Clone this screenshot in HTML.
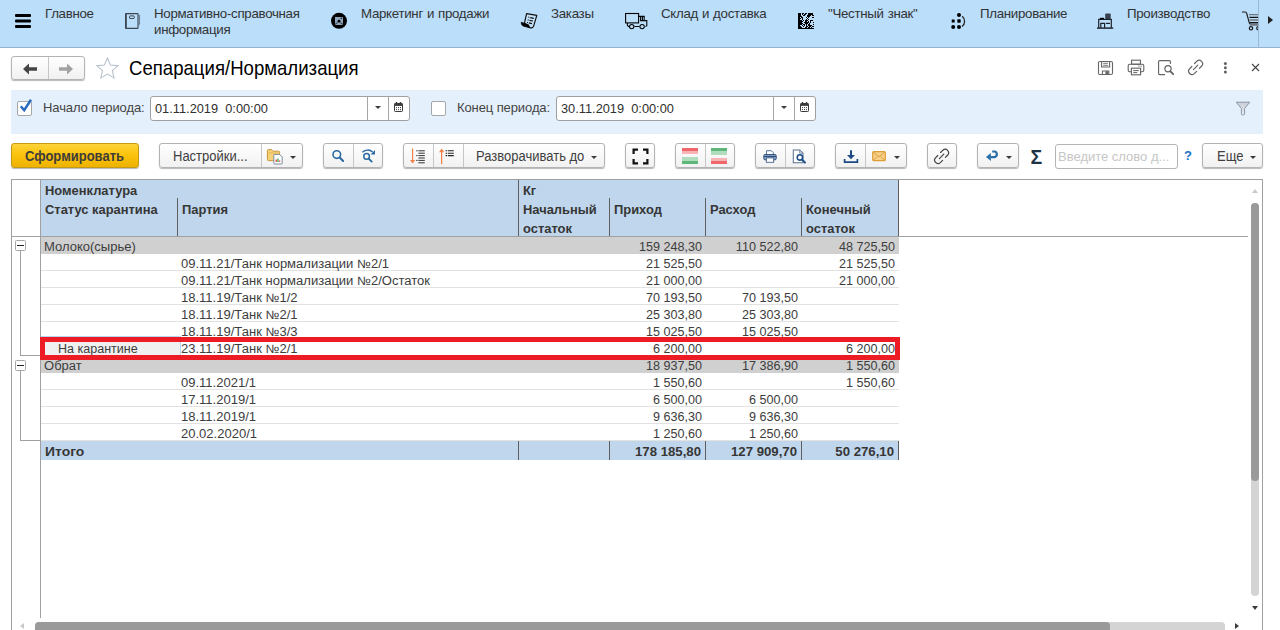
<!DOCTYPE html>
<html lang="ru">
<head>
<meta charset="utf-8">
<title>Сепарация/Нормализация</title>
<style>
*{box-sizing:border-box;margin:0;padding:0}
html,body{width:1280px;height:630px;overflow:hidden;background:#fff}
body{position:relative;font-family:"Liberation Sans",Arial,sans-serif;font-size:12.7px;color:#333;}
.abs{position:absolute}
/* ---------- top sections panel ---------- */
#nav{position:absolute;left:0;top:0;width:1280px;height:48px;background:#bbdefa;border-bottom:1px solid #96b2ce}
#nav .t{position:absolute;top:5.6px;font-size:13.3px;letter-spacing:-.3px;word-spacing:.6px;line-height:16px;color:#333;white-space:nowrap}
#nav svg{position:absolute}
/* ---------- title row ---------- */
#title{position:absolute;left:129px;top:57px;font-size:18.6px;line-height:24px;color:#000;white-space:nowrap;transform:scaleY(1.075);transform-origin:0 18px}
.btn{position:absolute;height:25px;border:1px solid #b3b3b3;border-radius:3px;background:linear-gradient(#ffffff,#f1f1f1);box-shadow:0 1px 1px rgba(0,0,0,.28)}
.btn .sep{position:absolute;top:0;bottom:0;width:1px;background:#c6c6c6}
.btn .lbl{position:absolute;top:0;line-height:25px;font-size:13px;color:#404040;white-space:nowrap;transform:scaleY(1.08);transform-origin:0 17px}
.btn svg{position:absolute}
.caret{position:absolute;width:0;height:0;border-left:3px solid transparent;border-right:3px solid transparent;border-top:3px solid #3a3a3a;margin-top:2px}
/* ---------- filter panel ---------- */
#filter{position:absolute;left:11px;top:90px;width:1252px;height:44px;background:#e4f0fc}
.lab{position:absolute;font-size:13px;letter-spacing:-.1px;line-height:16px;color:#444;white-space:nowrap}
.inp{position:absolute;height:25px;border:1px solid #a0a0a0;border-radius:3px;background:#fff}
.inp .val{position:absolute;left:4px;top:0;line-height:23px;font-size:12.8px;color:#303030;white-space:pre}
.inp svg{position:absolute}
.inp .sep{position:absolute;top:0;bottom:0;width:1px;background:#a6a6a6}
.chk{position:absolute;width:15px;height:15px;border:1px solid #a6a6a6;border-radius:2px;background:#fff}
/* ---------- table ---------- */
#grid{position:absolute;left:11px;top:179px;width:1252px;height:460px;border:1px solid #9f9f9f;background:#fff}
.cell{position:absolute;font-size:12px;letter-spacing:0;line-height:17px;color:#3d3d3d;white-space:nowrap;transform:scaleX(1.085);transform-origin:0 0}
.hd{font-size:12px;line-height:19px;color:#363636;transform:scaleX(1.075)}
.num{text-align:right;transform:scaleX(1.05);transform-origin:100% 0}
.tot{font-size:13.2px;transform:none}
.b{font-weight:bold}
</style>
</head>
<body>

<!-- ======= sections panel ======= -->
<div id="nav">
<svg style="left:15px;top:14px" width="16" height="14" viewBox="0 0 16 14"><rect x="0" y="0" width="16" height="3" rx="1" fill="#000"/><rect x="0" y="5.5" width="16" height="3" rx="1" fill="#000"/><rect x="0" y="11" width="16" height="3" rx="1" fill="#000"/></svg>
<div class="t" style="left:45px">Главное</div>

<svg style="left:124px;top:12px" width="17" height="18" viewBox="0 0 17 18"><rect x="1.6" y="1.6" width="12.4" height="14.8" rx=".4" fill="none" stroke="#3c4650" stroke-width="1.1"/><rect x="1.2" y="1.6" width="1.6" height="14.8" fill="#3c4650"/><rect x="5.6" y="3.9" width="4.6" height="2.6" rx=".5" fill="none" stroke="#3c4650" stroke-width="1"/><path d="M14.2 3.4h1.4v2.2h-1.4M14.2 6.6h1.4v2.2h-1.4M14.2 9.8h1.4v2.2h-1.4M14.2 13h1.4" fill="#7d8fa3" stroke="#56667a" stroke-width=".8"/></svg>
<div class="t" style="left:154px">Нормативно-справочная<br>информация</div>

<svg style="left:330px;top:12px" width="18" height="18" viewBox="0 0 18 18"><circle cx="9" cy="8.8" r="8" fill="#000"/><rect x="5" y="5" width="8" height="8" fill="#90a6bc"/><circle cx="9" cy="9.2" r="1.4" fill="#000"/><path d="M5.6 12.6c.4-1.6 1.4-2 2-1.6M12.4 12.6c-.4-1.6-1.4-2-2-1.6" fill="none" stroke="#1a1a1a" stroke-width="1"/><path d="M10.6 6.8l1.4-1" stroke="#222" stroke-width="1.2"/></svg>
<div class="t" style="left:361px">Маркетинг и продажи</div>

<svg style="left:520px;top:11px" width="19" height="19" viewBox="0 0 19 19"><path d="M6.6 2.6L16.8 4.4 13.6 15.2Q12.6 17.4 10.4 16.8 8.2 16 8.6 14.2L4.4 12.4Z" fill="#c4e2fa" stroke="#111" stroke-width="1.2" stroke-linejoin="round"/><path d="M1.3 11.2L8.6 14.2Q8.2 16 10 16.9L2.6 14.8Q1 13.6 1.3 11.2Z" fill="#000" stroke="#000" stroke-width=".8" stroke-linejoin="round"/><path d="M8.4 6.2l.9.2M10.2 6.6l3.6.7M7.7 8.9l.9.2M9.5 9.3l3.4.7M7 11.5l.9.2M8.8 11.9l3.2.7" stroke="#111" stroke-width="1.2"/></svg>
<div class="t" style="left:551px">Заказы</div>

<svg style="left:624px;top:12px" width="24" height="18" viewBox="0 0 24 18"><rect x="1.6" y="1.5" width="13" height="9.4" fill="none" stroke="#000" stroke-width="1.1"/><path d="M14.6 4.4h5.6v4.2h-3.6v-4M18.4 4.6v3.8" fill="none" stroke="#000" stroke-width="1.1"/><path d="M20.6 8.6h2.2v5.2l-1.4.8" fill="none" stroke="#000" stroke-width="1.05"/><path d="M3.4 11v2.4l1.6 1.4M10.4 14.4h5" fill="none" stroke="#000" stroke-width="1.05"/><circle cx="7.7" cy="14.6" r="2.2" fill="none" stroke="#000" stroke-width="1.05"/><circle cx="18.1" cy="14.6" r="2.2" fill="none" stroke="#000" stroke-width="1.05"/></svg>
<div class="t" style="left:661px">Склад и доставка</div>

<svg style="left:798px;top:13px" width="16" height="16" viewBox="0 0 16 16"><rect width="16" height="16" fill="#000"/><path d="M3 0h1v1h-1zM6 0h1v1h-1zM9 0h1v1h-1zM15 0h1v1h-1zM3 1h1v1h-1zM5 1h1v1h-1zM8 1h1v1h-1zM9 1h1v1h-1zM15 1h1v1h-1zM3 2h1v1h-1zM4 2h1v1h-1zM7 2h1v1h-1zM8 2h1v1h-1zM13 2h1v1h-1zM4 3h1v1h-1zM5 3h1v1h-1zM6 3h1v1h-1zM7 3h1v1h-1zM8 3h1v1h-1zM12 3h1v1h-1zM13 3h1v1h-1zM14 3h1v1h-1zM15 3h1v1h-1zM2 4h1v1h-1zM5 4h1v1h-1zM6 4h1v1h-1zM7 4h1v1h-1zM9 4h1v1h-1zM11 4h1v1h-1zM12 4h1v1h-1zM13 4h1v1h-1zM3 5h1v1h-1zM5 5h1v1h-1zM6 5h1v1h-1zM7 5h1v1h-1zM8 5h1v1h-1zM10 5h1v1h-1zM11 5h1v1h-1zM12 5h1v1h-1zM13 5h1v1h-1zM14 5h1v1h-1zM15 5h1v1h-1zM2 6h1v1h-1zM3 6h1v1h-1zM5 6h1v1h-1zM6 6h1v1h-1zM7 6h1v1h-1zM9 6h1v1h-1zM11 6h1v1h-1zM12 6h1v1h-1zM13 6h1v1h-1zM14 6h1v1h-1zM15 6h1v1h-1zM4 7h1v1h-1zM6 7h1v1h-1zM10 7h1v1h-1zM11 7h1v1h-1zM15 7h1v1h-1zM5 8h1v1h-1zM6 8h1v1h-1zM9 8h1v1h-1zM11 8h1v1h-1zM13 8h1v1h-1zM14 8h1v1h-1zM15 8h1v1h-1zM4 9h1v1h-1zM5 9h1v1h-1zM11 9h1v1h-1zM13 9h1v1h-1zM14 9h1v1h-1zM5 10h1v1h-1zM6 10h1v1h-1zM10 10h1v1h-1zM12 10h1v1h-1zM13 10h1v1h-1zM14 10h1v1h-1zM15 10h1v1h-1zM4 11h1v1h-1zM7 11h1v1h-1zM9 11h1v1h-1zM12 11h1v1h-1zM13 11h1v1h-1zM14 11h1v1h-1zM2 12h1v1h-1zM3 12h1v1h-1zM5 12h1v1h-1zM7 12h1v1h-1zM9 12h1v1h-1zM14 12h1v1h-1zM15 12h1v1h-1zM3 13h1v1h-1zM4 13h1v1h-1zM6 13h1v1h-1zM7 13h1v1h-1zM10 13h1v1h-1zM13 13h1v1h-1zM4 14h1v1h-1zM5 14h1v1h-1zM6 14h1v1h-1zM9 14h1v1h-1zM12 14h1v1h-1zM14 14h1v1h-1zM15 14h1v1h-1z" fill="#bbdefa"/></svg>
<div class="t" style="left:828px">"Честный знак"</div>

<svg style="left:950px;top:12px" width="17" height="18" viewBox="0 0 17 18"><circle cx="9" cy="2.9" r="2" fill="#000"/><rect x="1.7" y="7.5" width="3" height="3" rx=".6" fill="#000"/><rect x="7.3" y="7.3" width="3.4" height="3.4" rx=".6" fill="#000"/><circle cx="3.2" cy="15.1" r="2" fill="#000"/><circle cx="9" cy="15.1" r="2" fill="#000"/><path d="M12.2 4.2c3.2 2.6 3.2 7.8-.2 10.4" fill="none" stroke="#222" stroke-width="1.3"/></svg>
<div class="t" style="left:980px">Планирование</div>

<svg style="left:1096px;top:12px" width="18" height="18" viewBox="0 0 18 18"><rect x="9.2" y="1.4" width="5.5" height="5.6" rx=".8" fill="#38424e"/><path d="M2.7 16V7.4h12.6V16" fill="none" stroke="#1b2028" stroke-width="1.2"/><path d="M4 6.6h4" stroke="#000" stroke-width="1.6"/><path d="M4.8 16v-4.6h3.8V16" fill="none" stroke="#1b2028" stroke-width="1.2"/><path d="M10 11.4h4" stroke="#1b2028" stroke-width="1.2"/><path d="M1 16.1h16.2" stroke="#2a323c" stroke-width="1.6"/></svg>
<div class="t" style="left:1127px">Производство</div>

<svg style="left:1241px;top:10px" width="17" height="21" viewBox="0 0 17 21"><path d="M1.4 2h2.8c.8 0 1.2.4 1.5 1.4l2.6 9.4c.2.8.6 1.2 1.4 1.2h7.4" fill="none" stroke="#1c1c1c" stroke-width="1.2" stroke-linecap="round"/><path d="M8 4.7h9.2M8.6 10h8.6M8.6 15.2h8.6" stroke="#70757c" stroke-width="1.3"/><path d="M8.4 7.4h8.8M8.6 12.5h8.6" stroke="#111" stroke-width="1.2"/><circle cx="10" cy="18.3" r="1.7" fill="none" stroke="#1c1c1c" stroke-width="1.2"/><circle cx="17.4" cy="18.3" r="1.7" fill="none" stroke="#1c1c1c" stroke-width="1.2"/></svg>
<div class="abs" style="left:1258px;top:0;width:1px;height:47px;background:#9bb7d3"></div>
<div class="abs" style="left:1268px;top:16px;width:0;height:0;border-top:4.5px solid transparent;border-bottom:4.5px solid transparent;border-left:5.5px solid #222"></div>
</div>

<!-- ======= title row ======= -->

<div class="btn" style="left:11px;top:56px;width:74px;height:24px">
  <div class="sep" style="left:36px"></div>
  <svg style="left:11px;top:6px" width="15" height="12" viewBox="0 0 15 12"><path d="M0 6l6-5.6v3.9h8v3.4h-8v3.9z" fill="#444"/></svg>
  <svg style="left:47px;top:6px" width="15" height="12" viewBox="0 0 15 12"><path d="M14 6l-6-5.6v3.9h-8v3.4h8v3.9z" fill="#a2a2a2"/></svg>
</div>
<svg class="abs" style="left:95px;top:56px" width="25" height="24" viewBox="0 0 27 26"><path d="M13.4 2.2l3.3 7.6 8.2.7-6.2 5.4 1.9 8-7.2-4.3-7.2 4.3 1.9-8-6.2-5.4 8.2-.7z" fill="#fff" stroke="#b5bfca" stroke-width="1.1" stroke-linejoin="miter"/></svg>
<div id="title">Сепарация/Нормализация</div>

<!-- right-side form icons -->
<svg class="abs" style="left:1097px;top:60px" width="17" height="16" viewBox="0 0 17 16"><rect x="1.5" y="1.5" width="14" height="13" rx="1.4" fill="none" stroke="#666" stroke-width="1.1"/><path d="M4.6 1.6v5.4h8V1.6" fill="none" stroke="#666" stroke-width="1.1"/><path d="M6.2 3.3h4.8M6.2 5.3h4.8" stroke="#666" stroke-width=".9"/><path d="M5.4 14.4v-3.4h6.4v3.4" fill="none" stroke="#666" stroke-width="1.1"/><rect x="8.4" y="11.2" width="3" height="3.2" fill="#666"/></svg>
<svg class="abs" style="left:1127px;top:59px" width="18" height="17" viewBox="0 0 18 17"><rect x="4.6" y="1.2" width="8.8" height="4" fill="none" stroke="#636363" stroke-width="1.1"/><rect x="1.2" y="5.2" width="15.6" height="7.6" rx="1.6" fill="none" stroke="#636363" stroke-width="1.1"/><rect x="4.4" y="9.2" width="9.2" height="6.6" fill="#fff" stroke="#636363" stroke-width="1.1"/><path d="M6.2 11.6h5.6M6.2 13.6h4" stroke="#636363" stroke-width="1"/><path d="M11.4 7.2h1M13.6 7.2h1" stroke="#636363" stroke-width="1.2"/></svg>
<svg class="abs" style="left:1157px;top:59px" width="18" height="18" viewBox="0 0 18 18"><path d="M13.4 5V2.6a1 1 0 0 0-1-1H2.6a1 1 0 0 0-1 1v12a1 1 0 0 0 1 1H8" fill="none" stroke="#636363" stroke-width="1.1"/><circle cx="11" cy="9.8" r="3.1" fill="none" stroke="#636363" stroke-width="1.2"/><path d="M13.2 12.2l3 3" stroke="#636363" stroke-width="1.8" stroke-linecap="round"/></svg>
<svg class="abs" style="left:1187px;top:59px" width="18" height="18" viewBox="0 0 18 18"><g fill="none" stroke="#636363" stroke-width="1.2" stroke-linecap="round"><path d="M7.6 4.5L9.9 2.2A3.4 3.4 0 0 1 14.7 7L12.4 9.3"/><path d="M9.6 12.3L7.3 14.6A3.4 3.4 0 0 1 2.5 9.8L4.8 7.5"/><path d="M6.4 10.6L10.8 6.2"/></g></svg>
<svg class="abs" style="left:1222px;top:61px" width="7" height="14" viewBox="0 0 7 14"><circle cx="3.4" cy="2.5" r="1.5" fill="#636363"/><circle cx="3.4" cy="6.7" r="1.5" fill="#636363"/><circle cx="3.4" cy="10.9" r="1.5" fill="#636363"/></svg>
<svg class="abs" style="left:1251px;top:63px" width="9" height="9" viewBox="0 0 9 9"><path d="M1 1l7 7M8 1l-7 7" stroke="#444" stroke-width="1.1"/></svg>


<!-- ======= filter ======= -->

<div id="filter">
  <div class="chk" style="left:6px;top:11px"></div>
  <svg class="abs" style="left:7px;top:8px" width="16" height="16" viewBox="0 0 16 16"><path d="M2.8 8.2l3.4 4 6.8-10.4" fill="none" stroke="#2a6bbd" stroke-width="2.5"/></svg>
  <div class="lab" style="left:32px;top:10px">Начало периода:</div>
  <div class="inp" style="left:139px;top:6px;width:260px">
    <div class="val">01.11.2019  0:00:00</div>
    <div class="sep" style="left:216px"></div><div class="caret" style="left:224px;top:7px"></div>
    <div class="sep" style="left:237px"></div><svg style="left:243px;top:5px" width="9" height="10" viewBox="0 0 9 10"><rect x=".5" y="1.5" width="8" height="8" rx=".8" fill="#fff" stroke="#3a3a3a" stroke-width="1"/><rect x=".5" y="1.5" width="8" height="2.4" fill="#3a3a3a"/><path d="M2.5 0v2M6.5 0v2" stroke="#3a3a3a" stroke-width="1.4"/><path d="M2 5.6h1M4 5.6h1M6 5.6h1M2 7.6h1M4 7.6h1M6 7.6h1" stroke="#3a3a3a" stroke-width="1"/></svg>
  </div>
  <div class="chk" style="left:420px;top:11px"></div>
  <div class="lab" style="left:446px;top:10px">Конец периода:</div>
  <div class="inp" style="left:545px;top:6px;width:260px">
    <div class="val">30.11.2019  0:00:00</div>
    <div class="sep" style="left:216px"></div><div class="caret" style="left:224px;top:7px"></div>
    <div class="sep" style="left:237px"></div><svg style="left:243px;top:5px" width="9" height="10" viewBox="0 0 9 10"><rect x=".5" y="1.5" width="8" height="8" rx=".8" fill="#fff" stroke="#3a3a3a" stroke-width="1"/><rect x=".5" y="1.5" width="8" height="2.4" fill="#3a3a3a"/><path d="M2.5 0v2M6.5 0v2" stroke="#3a3a3a" stroke-width="1.4"/><path d="M2 5.6h1M4 5.6h1M6 5.6h1M2 7.6h1M4 7.6h1M6 7.6h1" stroke="#3a3a3a" stroke-width="1"/></svg>
  </div>
  <svg class="abs" style="left:1224px;top:11px" width="16" height="15" viewBox="0 0 16 15"><defs><linearGradient id="fg" x1="0" y1="0" x2="0" y2="1"><stop offset="0" stop-color="#c9ced6"/><stop offset="1" stop-color="#e9ecf1"/></linearGradient></defs><path d="M1.2 1.2h13.6l-5.2 6.2v5.4a1 1 0 0 1-1 1H7.4a1 1 0 0 1-1-1V7.4z" fill="url(#fg)" stroke="#8b96a6" stroke-width="1" stroke-linejoin="round"/></svg>
</div>


<!-- ======= toolbar ======= -->

<div id="toolbar">
  <!-- Сформировать -->
  <div class="btn" style="left:11px;top:143px;width:128px;border-color:#c29a14;background:linear-gradient(#fdd33a,#fbc40c 45%,#eeb200)">
    <div class="lbl b" style="left:13px;font-size:13px;color:#3f3d3a">Сформировать</div>
  </div>
  <!-- Настройки -->
  <div class="btn" style="left:159px;top:143px;width:144px">
    <div class="lbl" style="left:13px">Настройки...</div>
    <div class="sep" style="left:101px"></div>
    <svg style="left:106px;top:3px" width="18" height="18" viewBox="0 0 18 18"><path d="M1.4 3.6a1 1 0 0 1 1-1h3.2l1.4 1.6h5.6a1 1 0 0 1 1 1v7.4a1 1 0 0 1-1 1H2.4a1 1 0 0 1-1-1z" fill="#f5d27a" stroke="#c9973a" stroke-width="1"/><path d="M1.6 6h12" stroke="#e7b95a" stroke-width="1"/><path d="M8.4 7.4h5.2l2.6 2.6v6.4a.6.6 0 0 1-.6.6H8.4a.6.6 0 0 1-.6-.6V8a.6.6 0 0 1 .6-.6z" fill="#fff" stroke="#7c8da0" stroke-width="1"/><path d="M10.2 15v-2.6" stroke="#e0403a" stroke-width="1.3"/><path d="M12 15v-3.6" stroke="#39a84c" stroke-width="1.3"/><path d="M13.7 15v-1.6" stroke="#e0403a" stroke-width="1.1"/></svg>
    <div class="caret" style="left:130px;top:10px"></div>
  </div>
  <!-- search group -->
  <div class="btn" style="left:323px;top:143px;width:60px">
    <div class="sep" style="left:29px"></div>
    <svg style="left:7px;top:5px" width="15" height="15" viewBox="0 0 15 15"><circle cx="5.8" cy="5.6" r="3.8" fill="none" stroke="#2a6aa2" stroke-width="1.6"/><path d="M8.7 8.6l3.4 3.4" stroke="#2a6aa2" stroke-width="2.1" stroke-linecap="round"/></svg>
    <svg style="left:37px;top:4px" width="16" height="16" viewBox="0 0 16 16"><circle cx="5.6" cy="8.4" r="2.8" fill="none" stroke="#2a6aa2" stroke-width="1.5"/><path d="M7.7 10.6l3 3" stroke="#2a6aa2" stroke-width="1.9" stroke-linecap="round"/><path d="M1.4 4.2c3-2.8 7.4-2.8 10.2-.2" fill="none" stroke="#2a6aa2" stroke-width="1.4"/><path d="M14 2v4.4h-4.4z" fill="#2a6aa2"/></svg>
  </div>
  <!-- expand group -->
  <div class="btn" style="left:403px;top:143px;width:202px">
    <div class="sep" style="left:29px"></div>
    <div class="sep" style="left:59px"></div>
    <svg style="left:5px;top:4px" width="18" height="17" viewBox="0 0 18 17"><path d="M3.6 .6v13.4" stroke="#f08146" stroke-width="1.2"/><path d="M1 12l2.6 3.6L6.2 12z" fill="#f08146"/><path d="M7.2 2.8h1.4M9.4 2.8h6.4M9.4 5.2h6.4M7.2 7.6h1.4M9.4 7.6h6.4M9.4 10h6.4M7.2 12.4h1.4M9.4 12.4h6.4M9.4 14.8h6.4" stroke="#333" stroke-width="1"/></svg>
    <svg style="left:34px;top:4px" width="18" height="17" viewBox="0 0 18 17"><path d="M3.6 2.6v13.6" stroke="#f08146" stroke-width="1.2"/><path d="M1 4.2L3.6 .6l2.6 3.6z" fill="#f08146"/><path d="M7.6 2.8h1.4M9.8 2.8h6M7.6 5.2h1.4M9.8 5.2h6M7.6 7.6h1.4M9.8 7.6h6" stroke="#222" stroke-width="1.1"/></svg>
    <div class="lbl" style="left:72px">Разворачивать до</div>
    <div class="caret" style="left:187px;top:10px"></div>
  </div>
  <!-- fullscreen -->
  <div class="btn" style="left:625px;top:143px;width:30px">
    <svg style="left:6px;top:4px" width="17" height="17" viewBox="0 0 17 17"><path d="M1.6 6V1.6H6M11 1.6h4.4V6M15.4 11v4.4H11M6 15.4H1.6V11" fill="none" stroke="#111" stroke-width="2.2"/></svg>
  </div>
  <!-- colour group -->
  <div class="btn" style="left:675px;top:143px;width:60px">
    <div class="sep" style="left:29px"></div>
    <svg style="left:6px;top:4px" width="16" height="17" viewBox="0 0 16 17" shape-rendering="crispEdges"><rect x="0" y="0" width="17" height="3" fill="#f0666a"/><rect x="0" y="3" width="17" height="3" fill="#f7b4b6"/><rect x="0" y="9" width="17" height="4" fill="#b1dcbd"/><rect x="0" y="13" width="17" height="3" fill="#5db878"/></svg>
    <svg style="left:35px;top:4px" width="16" height="17" viewBox="0 0 16 17" shape-rendering="crispEdges"><rect x="0" y="0" width="17" height="3" fill="#5db878"/><rect x="0" y="3" width="17" height="4" fill="#b1dcbd"/><rect x="0" y="10" width="17" height="3" fill="#f7b4b6"/><rect x="0" y="13" width="17" height="3" fill="#f0666a"/></svg>
  </div>
  <!-- print group -->
  <div class="btn" style="left:755px;top:143px;width:60px">
    <div class="sep" style="left:29px"></div>
    <svg style="left:7px;top:5.5px" width="14" height="13.2" viewBox="0 0 16 15"><path d="M4 .8h5.6l2.2 2.2v3H4z" fill="#fff" stroke="#41608a" stroke-width="1"/><rect x=".9" y="5.2" width="14.2" height="6" rx="1.4" fill="#8aa5c6" stroke="#2c4c78" stroke-width="1.1"/><path d="M1.4 7.4h13.2" stroke="#2c4c78" stroke-width="1.2"/><rect x="3.8" y="9" width="8.4" height="5" fill="#fff" stroke="#41608a" stroke-width="1"/></svg>
    <svg style="left:36px;top:5px" width="15.6" height="15.6" viewBox="0 0 17 17"><path d="M1.4 1h7l3.6 3.6v10.4H1.4z" fill="#fff" stroke="#58708f" stroke-width="1.1"/><path d="M8.4 1v3.6H12" fill="none" stroke="#6c87a8" stroke-width="1"/><circle cx="8.6" cy="9.2" r="2.9" fill="#fff" stroke="#1e4f86" stroke-width="1.7"/><path d="M10.9 11.6l3.2 3.2" stroke="#1e4f86" stroke-width="2.2" stroke-linecap="round"/></svg>
  </div>
  <!-- download / mail -->
  <div class="btn" style="left:835px;top:143px;width:72px">
    <div class="sep" style="left:29px"></div>
    <svg style="left:7px;top:6px" width="16" height="14" viewBox="0 0 16 14"><path d="M8 .2v6" stroke="#1b4b82" stroke-width="2"/><path d="M4 5L8 9.2 12 5z" fill="#1b4b82"/><path d="M1.6 9v3.2h12.8V9" fill="none" stroke="#1b4b82" stroke-width="1.7"/></svg>
    <svg style="left:36px;top:7px" width="15" height="11" viewBox="0 0 15 11"><rect x=".7" y=".7" width="12.6" height="9" rx="1" fill="#f7d08a" stroke="#dc9e36" stroke-width="1.2"/><path d="M1.2 1.2l5.8 4.6 5.8-4.6M1.2 9.4l4.2-3.8M12.8 9.4L8.6 5.6" fill="none" stroke="#dc9e36" stroke-width="1"/></svg>
    <div class="caret" style="left:58px;top:10px"></div>
  </div>
  <!-- link -->
  <div class="btn" style="left:927px;top:143px;width:30px">
    <svg style="left:5px;top:4px" width="18" height="18" viewBox="0 0 18 18"><g fill="none" stroke="#3f3f3f" stroke-width="1.15" stroke-linecap="round"><path d="M7.6 4.5L9.9 2.2A3.4 3.4 0 0 1 14.7 7L12.4 9.3"/><path d="M9.6 12.3L7.3 14.6A3.4 3.4 0 0 1 2.5 9.8L4.8 7.5"/><path d="M6.4 10.6L10.8 6.2"/></g></svg>
  </div>
  <!-- undo -->
  <div class="btn" style="left:977px;top:143px;width:42px">
    <svg style="left:8px;top:6px" width="14" height="12" viewBox="0 0 14 12"><path d="M4.4 7.1H8.7A2.9 2.9 0 0 0 8.7 1.5H6.2" fill="none" stroke="#2a6fa8" stroke-width="2.2"/><path d="M0 7.1L4.9 3.1v8z" fill="#2a6fa8"/></svg>
    <div class="caret" style="left:28px;top:10px"></div>
  </div>
  <!-- sigma -->
  <div class="abs" style="left:1030.5px;top:145px;font-size:19.5px;line-height:24px;font-weight:bold;color:#1f3347">Σ</div>
  <!-- search field -->
  <div class="inp" style="left:1055px;top:144px;width:123px;border-color:#b4b4b4"><div class="val" style="left:2px;font-size:13px;color:#c6c6c6">Введите слово д...</div></div>
  <div class="abs b" style="left:1184px;top:148px;font-size:13px;line-height:16px;color:#1a73c8">?</div>
  <!-- Еще -->
  <div class="btn" style="left:1202px;top:143px;width:61px">
    <div class="lbl" style="left:14px">Еще</div>
    <div class="caret" style="left:47px;top:10px"></div>
  </div>
</div>


<!-- ======= grid ======= -->
<div id="grid"></div>
<div class="abs" style="left:41px;top:180px;width:857px;height:56px;background:#c0d6ec"></div>
<div class="abs" style="left:12px;top:236px;width:1236px;height:1px;background:#a0a0a0"></div>
<div class="abs" style="left:40px;top:180px;width:1px;height:438px;background:#a0a0a0"></div>
<div class="abs" style="left:177px;top:198px;width:1px;height:38px;background:#5f5f5f"></div>
<div class="abs" style="left:518px;top:180px;width:1px;height:56px;background:#5f5f5f"></div>
<div class="abs" style="left:609px;top:198px;width:1px;height:38px;background:#5f5f5f"></div>
<div class="abs" style="left:705px;top:198px;width:1px;height:38px;background:#5f5f5f"></div>
<div class="abs" style="left:801px;top:198px;width:1px;height:38px;background:#5f5f5f"></div>
<div class="abs" style="left:898px;top:180px;width:1px;height:56px;background:#5f5f5f"></div>
<div class="cell b hd" style="left:45px;top:182px">Номенклатура</div>
<div class="cell b hd" style="left:45px;top:201px">Статус карантина</div>
<div class="cell b hd" style="left:182px;top:201px">Партия</div>
<div class="cell b hd" style="left:523px;top:182px">Кг</div>
<div class="cell b hd" style="left:523px;top:201px">Начальный</div>
<div class="cell b hd" style="left:523px;top:220px">остаток</div>
<div class="cell b hd" style="left:614px;top:201px">Приход</div>
<div class="cell b hd" style="left:710px;top:201px">Расход</div>
<div class="cell b hd" style="left:806px;top:201px">Конечный</div>
<div class="cell b hd" style="left:806px;top:220px">остаток</div>
<div class="abs" style="left:41px;top:237px;width:858px;height:17px;background:#d0d0d0"></div>
<div class="cell" style="left:44px;top:239px">Молоко(сырье)</div>
<div class="cell num" style="left:612px;width:90px;top:239px">159 248,30</div>
<div class="cell num" style="left:708px;width:90px;top:239px">110 522,80</div>
<div class="cell num" style="left:805px;width:90px;top:239px">48 725,50</div>
<div class="abs" style="left:41px;top:270px;width:858px;height:1px;background:#e2e2e2"></div>
<div class="cell" style="left:181px;top:256px">09.11.21/Танк нормализации №2/1</div>
<div class="cell num" style="left:612px;width:90px;top:256px">21 525,50</div>
<div class="cell num" style="left:805px;width:90px;top:256px">21 525,50</div>
<div class="abs" style="left:41px;top:287px;width:858px;height:1px;background:#e2e2e2"></div>
<div class="cell" style="left:181px;top:273px">09.11.21/Танк нормализации №2/Остаток</div>
<div class="cell num" style="left:612px;width:90px;top:273px">21 000,00</div>
<div class="cell num" style="left:805px;width:90px;top:273px">21 000,00</div>
<div class="abs" style="left:41px;top:304px;width:858px;height:1px;background:#e2e2e2"></div>
<div class="cell" style="left:181px;top:290px">18.11.19/Танк №1/2</div>
<div class="cell num" style="left:612px;width:90px;top:290px">70 193,50</div>
<div class="cell num" style="left:708px;width:90px;top:290px">70 193,50</div>
<div class="abs" style="left:41px;top:321px;width:858px;height:1px;background:#e2e2e2"></div>
<div class="cell" style="left:181px;top:307px">18.11.19/Танк №2/1</div>
<div class="cell num" style="left:612px;width:90px;top:307px">25 303,80</div>
<div class="cell num" style="left:708px;width:90px;top:307px">25 303,80</div>
<div class="abs" style="left:41px;top:338px;width:858px;height:1px;background:#e2e2e2"></div>
<div class="cell" style="left:181px;top:324px">18.11.19/Танк №3/3</div>
<div class="cell num" style="left:612px;width:90px;top:324px">15 025,50</div>
<div class="cell num" style="left:708px;width:90px;top:324px">15 025,50</div>
<div class="abs" style="left:41px;top:355px;width:858px;height:1px;background:#e2e2e2"></div>
<div class="abs" style="left:41px;top:336px;width:140px;height:21px;background:#f0f0f0;border:1px solid #b5d7f3"></div>
<div class="cell" style="left:58px;top:341px;transform:scaleX(1.045)">На карантине</div>
<div class="cell" style="left:181px;top:341px">23.11.19/Танк №2/1</div>
<div class="cell num" style="left:612px;width:90px;top:341px">6 200,00</div>
<div class="cell num" style="left:805px;width:90px;top:341px">6 200,00</div>
<div class="abs" style="left:41px;top:356px;width:858px;height:17px;background:#d0d0d0"></div>
<div class="cell" style="left:44px;top:358px">Обрат</div>
<div class="cell num" style="left:612px;width:90px;top:358px">18 937,50</div>
<div class="cell num" style="left:708px;width:90px;top:358px">17 386,90</div>
<div class="cell num" style="left:805px;width:90px;top:358px">1 550,60</div>
<div class="abs" style="left:41px;top:389px;width:858px;height:1px;background:#e2e2e2"></div>
<div class="cell" style="left:181px;top:375px">09.11.2021/1</div>
<div class="cell num" style="left:612px;width:90px;top:375px">1 550,60</div>
<div class="cell num" style="left:805px;width:90px;top:375px">1 550,60</div>
<div class="abs" style="left:41px;top:406px;width:858px;height:1px;background:#e2e2e2"></div>
<div class="cell" style="left:181px;top:392px">17.11.2019/1</div>
<div class="cell num" style="left:612px;width:90px;top:392px">6 500,00</div>
<div class="cell num" style="left:708px;width:90px;top:392px">6 500,00</div>
<div class="abs" style="left:41px;top:423px;width:858px;height:1px;background:#e2e2e2"></div>
<div class="cell" style="left:181px;top:409px">18.11.2019/1</div>
<div class="cell num" style="left:612px;width:90px;top:409px">9 636,30</div>
<div class="cell num" style="left:708px;width:90px;top:409px">9 636,30</div>
<div class="abs" style="left:41px;top:440px;width:858px;height:1px;background:#e2e2e2"></div>
<div class="cell" style="left:181px;top:426px">20.02.2020/1</div>
<div class="cell num" style="left:612px;width:90px;top:426px">1 250,60</div>
<div class="cell num" style="left:708px;width:90px;top:426px">1 250,60</div>
<div class="abs" style="left:41px;top:441px;width:858px;height:19px;background:#c0d6ec"></div>
<div class="abs" style="left:518px;top:441px;width:1px;height:19px;background:#5f5f5f"></div>
<div class="abs" style="left:609px;top:441px;width:1px;height:19px;background:#5f5f5f"></div>
<div class="abs" style="left:705px;top:441px;width:1px;height:19px;background:#5f5f5f"></div>
<div class="abs" style="left:801px;top:441px;width:1px;height:19px;background:#5f5f5f"></div>
<div class="abs" style="left:898px;top:441px;width:1px;height:19px;background:#5f5f5f"></div>
<div class="cell b hd tot" style="left:45px;top:442px;transform:scaleX(1.055)">Итого</div>
<div class="cell num b hd tot" style="left:611px;width:90px;top:442px">178 185,80</div>
<div class="cell num b hd tot" style="left:707px;width:90px;top:442px">127 909,70</div>
<div class="cell num b hd tot" style="left:804px;width:90px;top:442px">50 276,10</div>
<div class="abs" style="left:40px;top:337px;width:860px;height:23px;border:5px solid #ed1c24"></div>
<div class="abs" style="left:15px;top:240px;width:11px;height:11px;border:1px solid #a6a6a6;border-radius:1.5px;background:#fff"></div><div class="abs" style="left:17px;top:245px;width:7px;height:1px;background:#262626"></div>
<div class="abs" style="left:15px;top:360px;width:11px;height:11px;border:1px solid #a6a6a6;border-radius:1.5px;background:#fff"></div><div class="abs" style="left:17px;top:365px;width:7px;height:1px;background:#262626"></div>
<div class="abs" style="left:20px;top:251px;width:1px;height:105px;background:#a0a0a0"></div>
<div class="abs" style="left:20px;top:355px;width:20px;height:1px;background:#a0a0a0"></div>
<div class="abs" style="left:20px;top:371px;width:1px;height:70px;background:#a0a0a0"></div>
<div class="abs" style="left:20px;top:440px;width:20px;height:1px;background:#a0a0a0"></div>
<div class="abs" style="left:1251px;top:203px;width:8px;height:393px;border-radius:4px;background:#d4d4d4"></div>
<div class="abs" style="left:1251px;top:203px;width:8px;height:278px;border-radius:4px;background:#9a9a9a"></div>
<div class="abs" style="left:1252px;top:189px;width:0;height:0;border-left:3px solid transparent;border-right:3px solid transparent;border-bottom:4px solid #c9c9c9"></div>
<div class="abs" style="left:1252px;top:606px;width:0;height:0;border-left:3px solid transparent;border-right:3px solid transparent;border-top:4px solid #3c3c3c"></div>
<div class="abs" style="left:35px;top:622px;width:1190px;height:8px;border-radius:4px 4px 0 0;background:#d4d4d4"></div>
<div class="abs" style="left:35px;top:622px;width:1075px;height:8px;border-radius:4px 4px 0 0;background:#9a9a9a"></div>
<div class="abs" style="left:20px;top:623px;width:0;height:0;border-top:3px solid transparent;border-bottom:3px solid transparent;border-right:4px solid #c9c9c9"></div>
<div class="abs" style="left:1235px;top:623px;width:0;height:0;border-top:3px solid transparent;border-bottom:3px solid transparent;border-left:4px solid #3c3c3c"></div>

</body>
</html>
